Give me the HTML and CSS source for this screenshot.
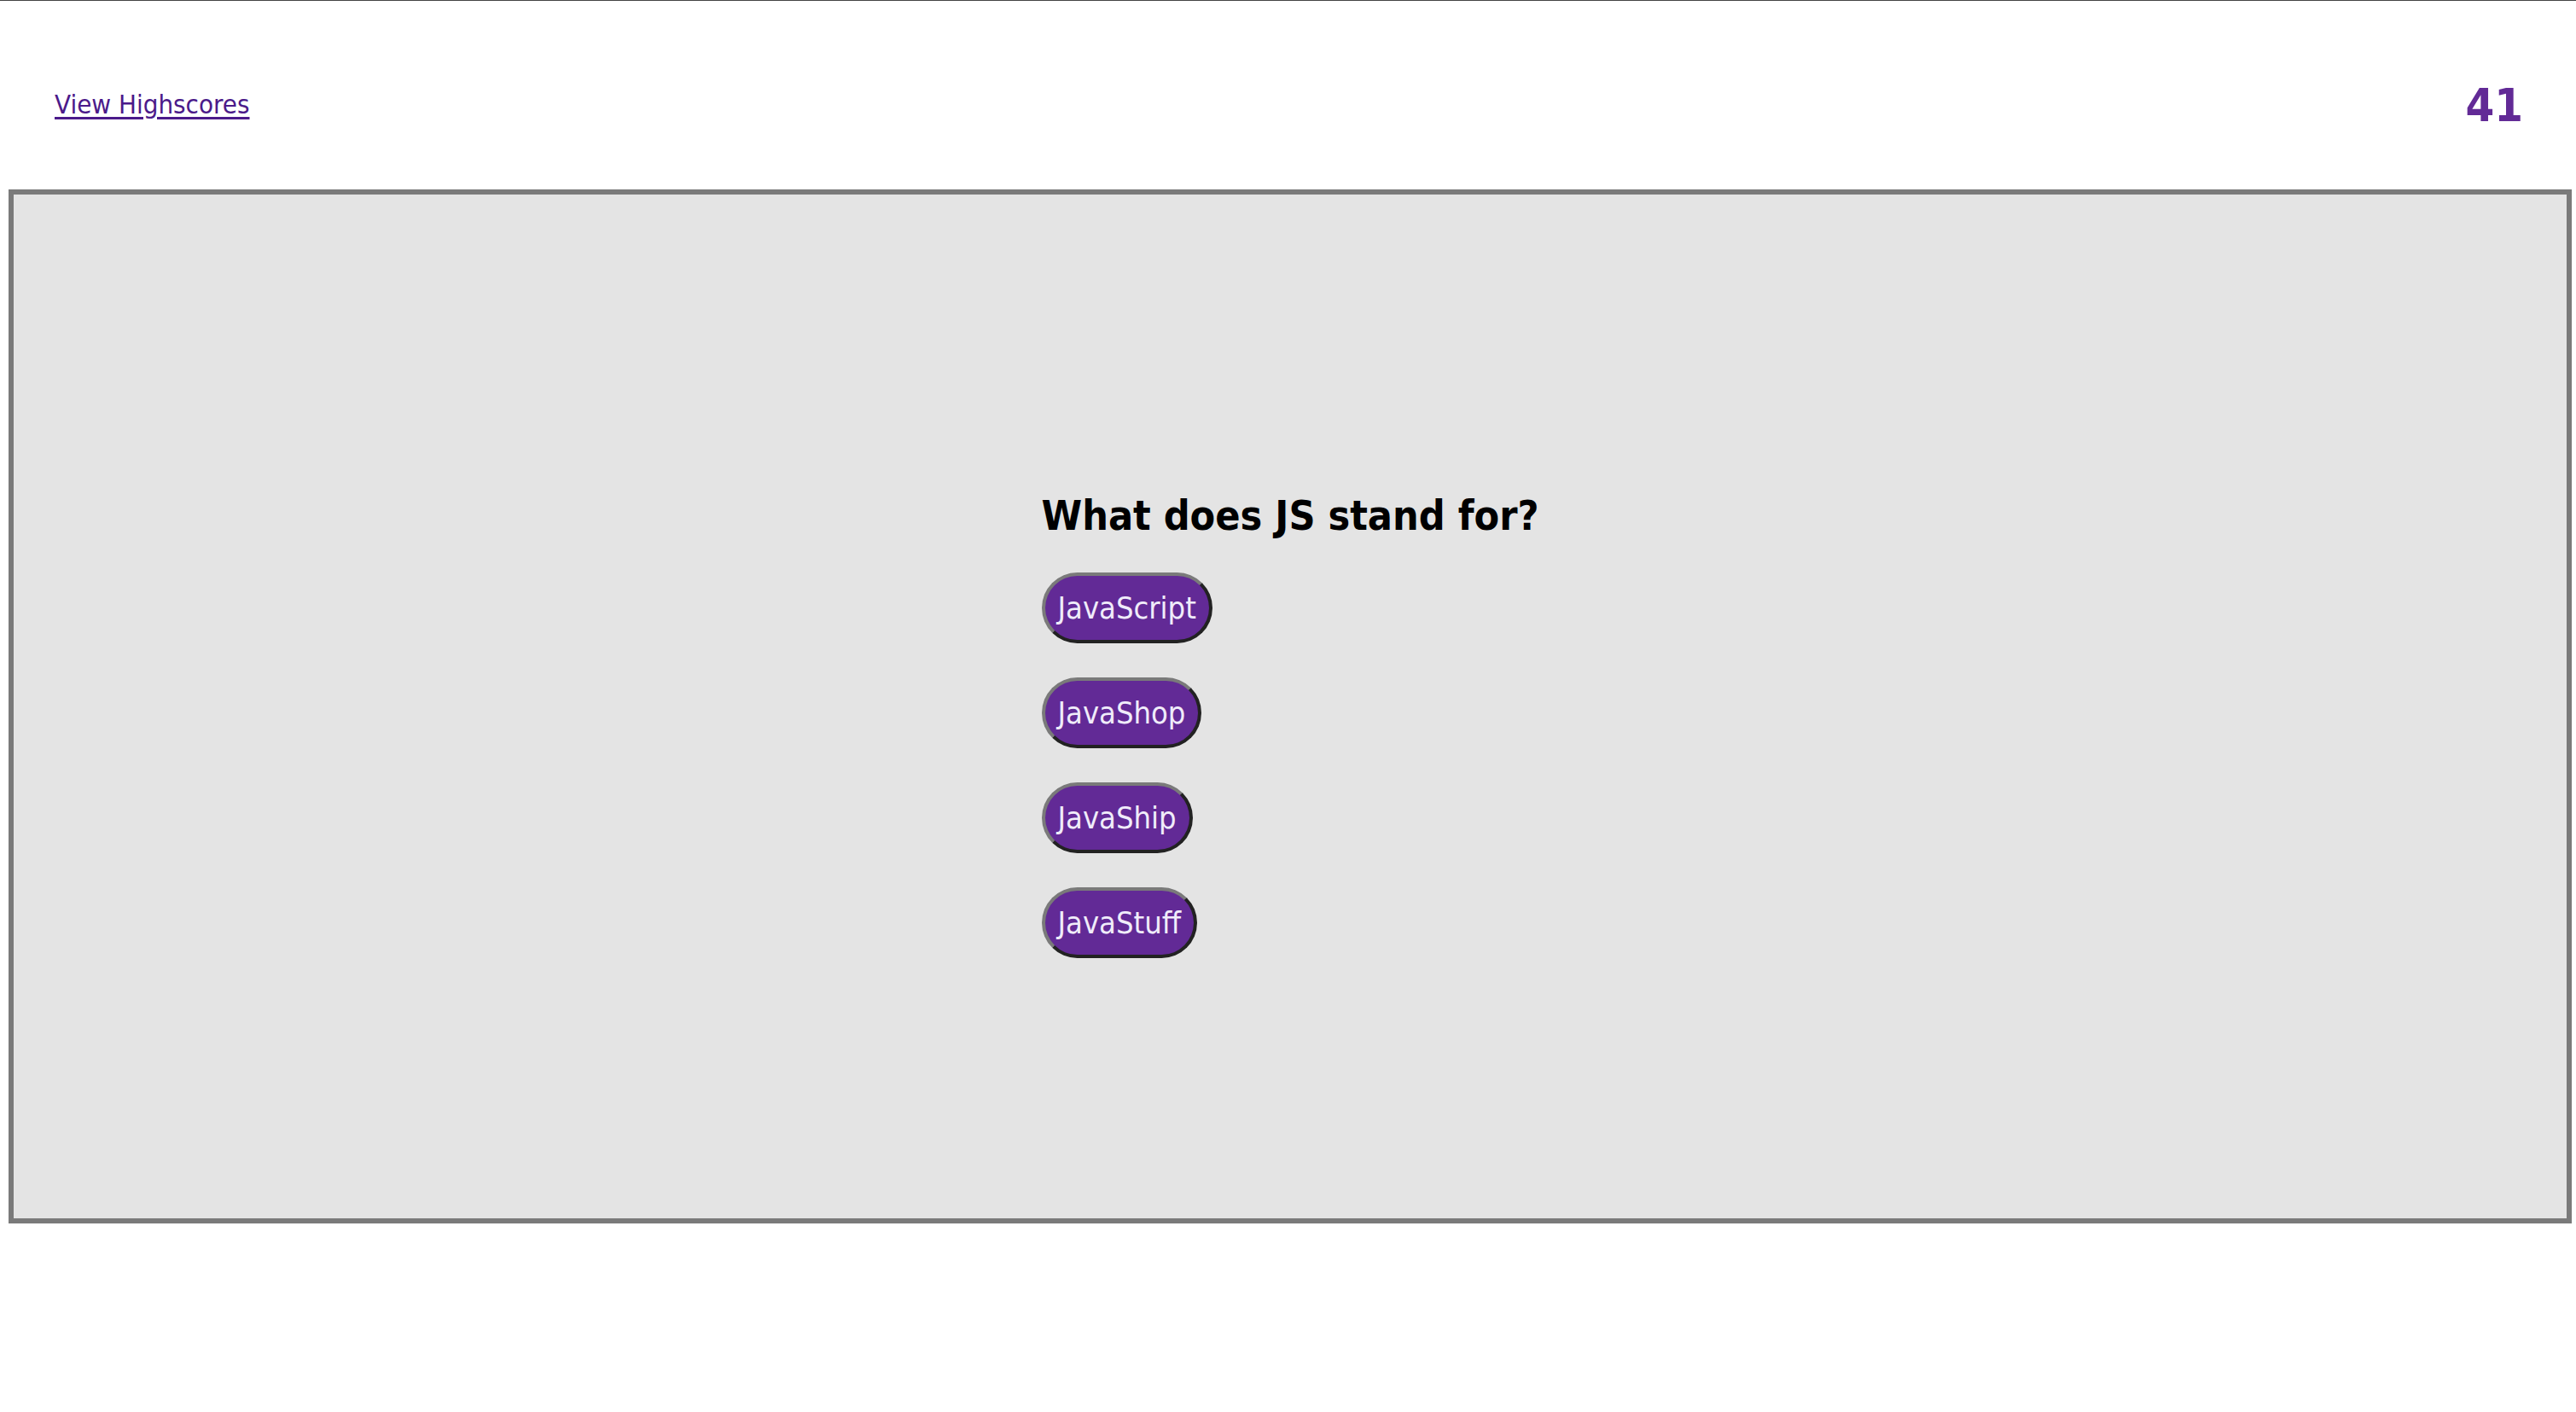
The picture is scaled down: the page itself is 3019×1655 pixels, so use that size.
FILE: index.html
```html
<!DOCTYPE html>
<html lang="en">
<head>
<meta charset="utf-8">
<title>Code Quiz</title>
<link rel="stylesheet" href="styles.css">
</head>
<body>
<header class="topbar">
  <a class="highscores" href="#">View Highscores</a>
  <span class="timer">41</span>
</header>
<main class="stage">
  <section class="quiz">
    <h2 class="question">What does JS stand for?</h2>
    <div class="answers">
      <button class="answer">JavaScript</button>
      <button class="answer">JavaShop</button>
      <button class="answer">JavaShip</button>
      <button class="answer">JavaStuff</button>
    </div>
  </section>
</main>
</body>
</html>
```
FILE: styles.css
```css
html, body {
  margin: 0;
  padding: 0;
  background: #ffffff;
}
body {
  border-top: 1px solid #444444;
  font-family: "DejaVu Sans Condensed", "DejaVu Sans", sans-serif;
  font-stretch: condensed;
}
.topbar {
  display: flex;
  justify-content: space-between;
  align-items: center;
  height: 221px;
  padding: 0 62px 0 64px;
  box-sizing: border-box;
}
.highscores {
  font-size: 31px;
  color: #4b1a8a;
  text-decoration: underline;
  text-decoration-thickness: 3px;
  text-underline-offset: 4px;
  margin-top: 20px;
}
.timer {
  font-size: 54px;
  font-weight: bold;
  color: #622a96;
  margin-top: 24px;
}
.stage {
  margin: 0 5px 0 10px;
  height: 1212px;
  box-sizing: border-box;
  border: 6px solid #7a7a7a;
  background: #e4e4e4;
  display: flex;
  justify-content: center;
  align-items: center;
}
.quiz {
  display: flex;
  flex-direction: column;
  align-items: flex-start;
}
.question {
  font-size: 48px;
  line-height: 60px;
  font-weight: bold;
  color: #000000;
  margin: 40px 0 37px;
}
.answers {
  display: flex;
  flex-direction: column;
  align-items: flex-start;
  gap: 40px;
}
.answer {
  font-family: inherit;
  font-stretch: condensed;
  font-size: 36px;
  color: #f0ecfa;
  background: #622a96;
  height: 83px;
  padding: 0 15px;
  border: 4px solid;
  border-color: #7a7a7a #222222 #222222 #7a7a7a;
  border-radius: 42px;
}
```
